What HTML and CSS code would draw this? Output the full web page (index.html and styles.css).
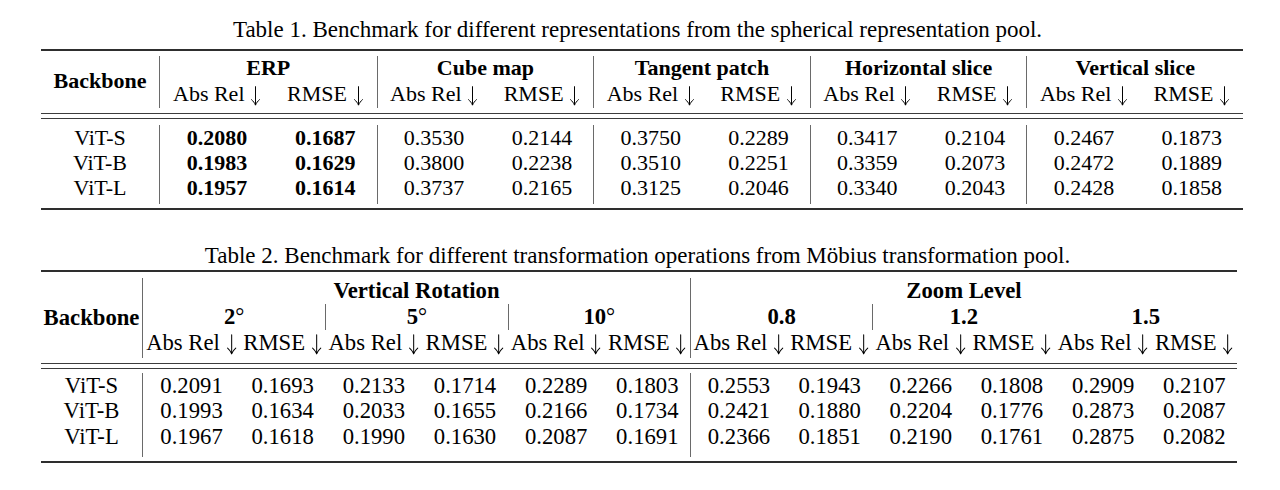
FILE: index.html
```html
<!DOCTYPE html>
<html lang="en">
<head>
<meta charset="utf-8">
<title>Benchmark tables</title>
<link rel="stylesheet" href="styles.css">
</head>
<body>
<svg class="defs" width="0" height="0" aria-hidden="true">
  <symbol id="dn" viewBox="0 0 10 18">
    <path d="M5 0.6V17.1M1.4 12.4C2.9 13.7 4.2 15.4 5 17.4C5.8 15.4 7.1 13.7 8.6 12.4" fill="none" stroke="#000" stroke-width="0.9" stroke-linecap="round"/>
  </symbol>
</svg>
<main class="page">
  <section class="block b1">
    <p class="caption">Table 1. Benchmark for different representations from the spherical representation pool.</p>
    <table class="tbl t1">
      <colgroup>
        <col class="c-bb">
        <col class="c-abs"><col class="c-rmse">
        <col class="c-abs"><col class="c-rmse">
        <col class="c-abs"><col class="c-rmse">
        <col class="c-abs"><col class="c-rmse">
        <col class="c-abs"><col class="c-rmse">
      </colgroup>
      <tbody>
        <tr class="rule thick"><td colspan="11"></td></tr>
        <tr class="sp sp5"><td colspan="11"></td></tr>
        <tr class="h1">
          <td class="bb head" rowspan="2">Backbone</td>
          <td class="head" colspan="2">ERP</td>
          <td class="head sl" colspan="2">Cube map</td>
          <td class="head sl" colspan="2">Tangent patch</td>
          <td class="head sl" colspan="2">Horizontal slice</td>
          <td class="head sl" colspan="2">Vertical slice</td>
        </tr>
        <tr class="h2">
          <td>Abs Rel <svg class="arr"><use href="#dn"/></svg></td><td>RMSE <svg class="arr"><use href="#dn"/></svg></td>
          <td class="sl">Abs Rel <svg class="arr"><use href="#dn"/></svg></td><td>RMSE <svg class="arr"><use href="#dn"/></svg></td>
          <td class="sl">Abs Rel <svg class="arr"><use href="#dn"/></svg></td><td>RMSE <svg class="arr"><use href="#dn"/></svg></td>
          <td class="sl">Abs Rel <svg class="arr"><use href="#dn"/></svg></td><td>RMSE <svg class="arr"><use href="#dn"/></svg></td>
          <td class="sl">Abs Rel <svg class="arr"><use href="#dn"/></svg></td><td>RMSE <svg class="arr"><use href="#dn"/></svg></td>
        </tr>
        <tr class="sp sp5"><td colspan="11"></td></tr>
        <tr class="rule"><td colspan="11"></td></tr>
        <tr class="sp sp4"><td colspan="11"></td></tr>
        <tr class="rule"><td colspan="11"></td></tr>
        <tr class="sp sp6"><td colspan="11"></td></tr>
        <tr class="row">
          <td class="bb">ViT-S</td>
          <td class="b">0.2080</td><td class="b">0.1687</td>
          <td class="sl">0.3530</td><td>0.2144</td>
          <td class="sl">0.3750</td><td>0.2289</td>
          <td class="sl">0.3417</td><td>0.2104</td>
          <td class="sl">0.2467</td><td>0.1873</td>
        </tr>
        <tr class="row">
          <td class="bb">ViT-B</td>
          <td class="b">0.1983</td><td class="b">0.1629</td>
          <td class="sl">0.3800</td><td>0.2238</td>
          <td class="sl">0.3510</td><td>0.2251</td>
          <td class="sl">0.3359</td><td>0.2073</td>
          <td class="sl">0.2472</td><td>0.1889</td>
        </tr>
        <tr class="row last">
          <td class="bb">ViT-L</td>
          <td class="b">0.1957</td><td class="b">0.1614</td>
          <td class="sl">0.3737</td><td>0.2165</td>
          <td class="sl">0.3125</td><td>0.2046</td>
          <td class="sl">0.3340</td><td>0.2043</td>
          <td class="sl">0.2428</td><td>0.1858</td>
        </tr>
        <tr class="sp sp4"><td colspan="11"></td></tr>
        <tr class="rule thick"><td colspan="11"></td></tr>
      </tbody>
    </table>
  </section>

  <section class="block b2">
    <p class="caption">Table 2. Benchmark for different transformation operations from Möbius transformation pool.</p>
    <table class="tbl t2">
      <colgroup>
        <col class="c-bb">
        <col class="c-abs"><col class="c-rmse">
        <col class="c-abs"><col class="c-rmse">
        <col class="c-abs"><col class="c-rmse">
        <col class="c-abs"><col class="c-rmse">
        <col class="c-abs"><col class="c-rmse">
        <col class="c-abs"><col class="c-rmse">
      </colgroup>
      <tbody>
        <tr class="rule thick"><td colspan="13"></td></tr>
        <tr class="sp sp6"><td colspan="13"></td></tr>
        <tr class="h1">
          <td class="bb head" rowspan="3">Backbone</td>
          <td class="head" colspan="6">Vertical Rotation</td>
          <td class="head sl" colspan="6">Zoom Level</td>
        </tr>
        <tr class="h2">
          <td class="head" colspan="2">2<span class="deg">°</span></td>
          <td class="head sl" colspan="2">5<span class="deg">°</span></td>
          <td class="head sl" colspan="2">10<span class="deg">°</span></td>
          <td class="head sl" colspan="2">0.8</td>
          <td class="head sl" colspan="2">1.2</td>
          <td class="head" colspan="2">1.5</td>
        </tr>
        <tr class="h3">
          <td>Abs Rel <svg class="arr"><use href="#dn"/></svg></td><td>RMSE <svg class="arr"><use href="#dn"/></svg></td>
          <td>Abs Rel <svg class="arr"><use href="#dn"/></svg></td><td>RMSE <svg class="arr"><use href="#dn"/></svg></td>
          <td>Abs Rel <svg class="arr"><use href="#dn"/></svg></td><td>RMSE <svg class="arr"><use href="#dn"/></svg></td>
          <td class="sl">Abs Rel <svg class="arr"><use href="#dn"/></svg></td><td>RMSE <svg class="arr"><use href="#dn"/></svg></td>
          <td>Abs Rel <svg class="arr"><use href="#dn"/></svg></td><td>RMSE <svg class="arr"><use href="#dn"/></svg></td>
          <td>Abs Rel <svg class="arr"><use href="#dn"/></svg></td><td>RMSE <svg class="arr"><use href="#dn"/></svg></td>
        </tr>
        <tr class="sp sp5"><td colspan="13"></td></tr>
        <tr class="rule"><td colspan="13"></td></tr>
        <tr class="sp sp4"><td colspan="13"></td></tr>
        <tr class="rule"><td colspan="13"></td></tr>
        <tr class="sp sp4"><td colspan="13"></td></tr>
        <tr class="row">
          <td class="bb">ViT-S</td>
          <td>0.2091</td><td>0.1693</td>
          <td>0.2133</td><td>0.1714</td>
          <td>0.2289</td><td>0.1803</td>
          <td class="sl">0.2553</td><td>0.1943</td>
          <td>0.2266</td><td>0.1808</td>
          <td>0.2909</td><td>0.2107</td>
        </tr>
        <tr class="row">
          <td class="bb">ViT-B</td>
          <td>0.1993</td><td>0.1634</td>
          <td>0.2033</td><td>0.1655</td>
          <td>0.2166</td><td>0.1734</td>
          <td class="sl">0.2421</td><td>0.1880</td>
          <td>0.2204</td><td>0.1776</td>
          <td>0.2873</td><td>0.2087</td>
        </tr>
        <tr class="row last">
          <td class="bb">ViT-L</td>
          <td>0.1967</td><td>0.1618</td>
          <td>0.1990</td><td>0.1630</td>
          <td>0.2087</td><td>0.1691</td>
          <td class="sl">0.2366</td><td>0.1851</td>
          <td>0.2190</td><td>0.1761</td>
          <td>0.2875</td><td>0.2082</td>
        </tr>
        <tr class="sp sp4"><td colspan="13"></td></tr>
        <tr class="rule thick"><td colspan="13"></td></tr>
      </tbody>
    </table>
  </section>
</main>
</body>
</html>
```

FILE: styles.css
```css
html, body {
  margin: 0;
  padding: 0;
  background: #ffffff;
}

body {
  font-family: "Liberation Serif", "Times New Roman", serif;
  color: #000000;
}

.defs {
  position: absolute;
  width: 0;
  height: 0;
  overflow: hidden;
}

.page {
  display: flex;
  flex-direction: column;
  align-items: flex-start;
  padding: 18px 0 0 41px;
}

.block {
  display: flex;
  flex-direction: column;
}

.b1 { width: 1202px; }
.b2 { width: 1196px; margin-top: 34px; }

.caption {
  margin: 0;
  font-size: 23px;
  line-height: 23px;
  text-align: center;
  white-space: nowrap;
}

.b1 .caption { margin-bottom: 8px; padding-right: 9px; }
.b2 .caption { margin-bottom: 3px; padding-right: 3px; }

.tbl {
  table-layout: fixed;
  border-collapse: separate;
  border-spacing: 0;
}

.t1 { width: 1202px; font-size: 22px; }
.t2 { width: 1196px; font-size: 22.7px; }

.t1 .c-bb { width: 119px; }
.t1 .c-abs { width: 114px; }
.t1 .c-rmse { width: 102.6px; }

.t2 .c-bb { width: 102px; }
.t2 .c-abs { width: 97px; }
.t2 .c-rmse { width: 85.3px; }

.tbl td {
  padding: 0;
  text-align: center;
  vertical-align: middle;
  white-space: nowrap;
}

.head { font-weight: bold; }
.b { font-weight: bold; }
.deg { font-weight: normal; }

.arr {
  display: inline-block;
  width: 0.5em;
  height: 0.9em;
  vertical-align: -0.22em;
}

.bb { border-right: 1px solid #6a6a6a; }
.sl { border-left: 1px solid #6a6a6a; }

/* rules */
.rule td {
  height: 0;
  font-size: 0;
  line-height: 0;
  border-top: 1px solid #3c3c3c;
}
.rule.thick td {
  border-top: 2px solid #2e2e2e;
}

/* spacers */
.sp td { font-size: 0; line-height: 0; }
.sp4 td { height: 4px; }
.sp5 td { height: 5px; }
.sp6 td { height: 6px; }

/* table 1 rows */
.t1 .h1 td { line-height: 23px; }
.t1 .h1 td.bb { padding-bottom: 3px; }
.t1 .h2 td { line-height: 23px; padding-top: 3px; padding-bottom: 2px; }
.t1 .row td { line-height: 25px; }
.t1 .row.last td { padding-bottom: 4px; }

/* table 2 rows */
.t2 .h1 td { line-height: 26px; }
.t2 .h2 td { line-height: 26px; }
.t2 .h3 td { line-height: 26px; padding-top: 0; padding-bottom: 2px; }
.t2 .row td { line-height: 25.5px; }
.t2 .row.last td { padding-bottom: 8px; }
```
